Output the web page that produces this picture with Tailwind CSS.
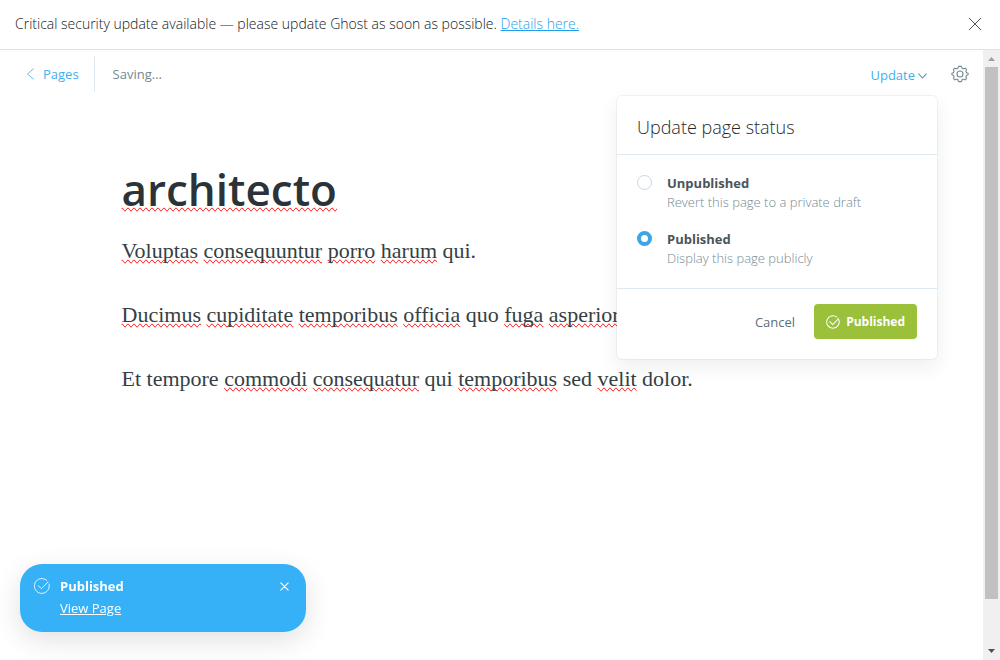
<!DOCTYPE html>
<html lang="en">
<head>
<meta charset="utf-8">
<meta name="viewport" content="width=device-width, initial-scale=1">
<title>Page editor</title>
<script src="https://cdn.jsdelivr.net/npm/@tailwindcss/browser@4"></script>
</head>
<body class="flex h-screen flex-col overflow-hidden bg-white font-['Open_Sans','Noto_Sans',sans-serif] text-[13px] leading-5 text-[#343f44]">

<aside class="flex shrink-0 items-center justify-between border-b border-[#dfe1e3] pt-[14px] pr-[18px] pb-[15px] pl-[15px]">
  <p class="text-[14px] font-light text-[#10181c]">Critical security update available — please update Ghost as soon as possible. <a href="#" class="text-[#1f9fea] underline">Details here.</a></p>
  <button type="button" aria-label="Close" class="p-0 text-[#4a555b]">
    <svg class="size-[14px]" viewBox="0 0 14 14" fill="none" stroke="currentColor" stroke-width="1" stroke-linecap="round"><path d="M1.2 1.2l11.6 11.6M12.8 1.2L1.2 12.8"/></svg>
  </button>
</aside>

<div class="flex min-h-0 flex-1">
  <main class="min-w-0 flex-1 overflow-hidden">
    <header class="flex items-center justify-between pt-[6px] pr-[14px] pl-[26px]">
      <div class="flex h-9 items-center">
        <a href="#" class="flex h-full items-center gap-2 border-r border-[#dfe9f1] pr-[15px] text-[#3eb0ef]">
          <svg class="h-3 w-[9px]" viewBox="0 0 9 12" fill="none" stroke="currentColor" stroke-width=".8" stroke-linecap="round" stroke-linejoin="round"><path d="M7.5 .8L1.5 6l6 5.2"/></svg>
          Pages
        </a>
        <span class="pl-[18px] text-[#738a94]">Saving...</span>
      </div>
      <div class="flex h-9 items-center gap-6">
        <div class="relative">
          <button type="button" aria-expanded="true" class="flex items-center gap-[3px] pt-[2px] text-[#3eb0ef]">Update
            <svg class="mt-[2px] h-[6px] w-[9px] text-[#5f95b0]" viewBox="0 0 9 6" fill="none" stroke="currentColor" stroke-width="1.1" stroke-linecap="round" stroke-linejoin="round"><path d="M.7 .8l3.8 4.2L8.3 .8"/></svg>
          </button>
          <form class="absolute top-[33px] -right-[10px] z-10 w-[320px] rounded-[5px] bg-white shadow-[0_0_0_1px_rgba(99,114,130,0.08),0_8px_20px_rgba(27,39,51,0.08)]">
            <h2 class="border-b border-[#dfe9f1] px-5 pt-[17px] pb-[13px] text-[18px] leading-7 font-light text-[#1f2a2f]">Update page status</h2>
            <div class="flex flex-col gap-[17px] border-b border-[#dfe9f1] px-5 pt-[18px] pb-5">
              <label class="flex items-start gap-[15px]">
                <input type="radio" name="status" class="mt-[2px] size-[15px] shrink-0 appearance-none rounded-full border border-[#c5d8e5] bg-white checked:border-4 checked:border-[#3ba5e6]">
                <span class="flex flex-col"><strong class="font-bold text-[#4a555b]">Unpublished</strong><span class="leading-[19px] font-light text-[#738a94]">Revert this page to a private draft</span></span>
              </label>
              <label class="flex items-start gap-[15px]">
                <input type="radio" name="status" checked class="mt-[2px] size-[15px] shrink-0 appearance-none rounded-full border border-[#c5d8e5] bg-white checked:border-4 checked:border-[#3ba5e6]">
                <span class="flex flex-col"><strong class="font-bold text-[#4a555b]">Published</strong><span class="leading-[19px] font-light text-[#738a94]">Display this page publicly</span></span>
              </label>
            </div>
            <div class="flex items-center justify-end gap-[19px] px-5 pt-[15px] pb-5">
              <button type="button" class="text-[#5b7079]">Cancel</button>
              <button type="submit" class="flex h-[35px] items-center gap-[6px] rounded-[4px] bg-[#9bc039] px-3 text-[12px] font-bold text-white">
                <svg class="size-[14px]" viewBox="0 0 24 24" fill="none" stroke="currentColor" stroke-width="1.8" stroke-linecap="round" stroke-linejoin="round"><path d="M21.9 8.200A10.700 10.700 0 1 1 18.600 3.600M6.500 11.500l5 5L21.500 6"/></svg>
                Published
              </button>
            </div>
          </form>
        </div>
        <button type="button" aria-label="Settings" class="text-[#738a94]">
          <svg class="size-[18px]" viewBox="0 0 24 24" fill="none" stroke="currentColor" stroke-width="1.5" stroke-linejoin="round"><circle cx="12" cy="12" r="4"/><path d="M14.300 3.200a2.500 2.500 0 0 0 3.600 1.500l1-.5 1.900 1.900-.5 1a2.500 2.500 0 0 0 1.500 3.600l1 .3v2l-1 .3a2.500 2.500 0 0 0-1.500 3.600l.5 1-1.900 1.900-1-.5a2.500 2.500 0 0 0-3.600 1.500l-.5 1.400h-3.600l-.5-1.400a2.500 2.500 0 0 0-3.600-1.500l-1 .5-1.900-1.900.5-1a2.500 2.500 0 0 0-1.500-3.600l-1-.3v-2l1-.3a2.500 2.500 0 0 0 1.500-3.600l-.5-1 1.900-1.900 1 .5a2.500 2.500 0 0 0 3.600-1.500l.5-1.400h3.600z"/></svg>
        </button>
      </div>
    </header>

    <article class="mx-auto max-w-[740px] pt-[66px]">
      <h1 class="text-[44px] leading-[62px] font-semibold text-[#2b3338]"><span class="[text-decoration-line:spelling-error]">architecto</span></h1>
      <div class="flex flex-col gap-8 pt-[15px] font-['Liberation_Serif',serif] text-[22px] leading-8">
        <p><span class="[text-decoration-line:spelling-error]">Voluptas</span> <span class="[text-decoration-line:spelling-error]">consequuntur</span> <span class="[text-decoration-line:spelling-error]">porro</span> <span class="[text-decoration-line:spelling-error]">harum</span> qui.</p>
        <p><span class="[text-decoration-line:spelling-error]">Ducimus</span> <span class="[text-decoration-line:spelling-error]">cupiditate</span> <span class="[text-decoration-line:spelling-error]">temporibus</span> <span class="[text-decoration-line:spelling-error]">officia</span> quo <span class="[text-decoration-line:spelling-error]">fuga</span> <span class="[text-decoration-line:spelling-error]">asperiores</span>.</p>
        <p>Et tempore <span class="[text-decoration-line:spelling-error]">commodi</span> <span class="[text-decoration-line:spelling-error]">consequatur</span> qui <span class="[text-decoration-line:spelling-error]">temporibus</span> sed <span class="[text-decoration-line:spelling-error]">velit</span> dolor.</p>
      </div>
    </article>
  </main>

  <div aria-hidden="true" class="flex w-[17px] shrink-0 flex-col items-center bg-[#f0f0f0]">
    <svg class="h-[17px] w-[17px] shrink-0" viewBox="0 0 17 17" fill="#a0a0a0"><path d="M5 11h7L8.500 7z"/></svg>
    <div class="mb-11 w-[13px] flex-1 bg-[#c1c1c1]"></div>
    <svg class="h-[17px] w-[17px] shrink-0" viewBox="0 0 17 17" fill="#505050"><path d="M5 6h7l-3.500 4z"/></svg>
  </div>
</div>

<section role="status" class="fixed bottom-7 left-5 flex w-[286px] items-start rounded-[22px] bg-[#36b1f8] pt-3 pr-[17px] pb-[13px] pl-[14px] text-white shadow-[0_8px_28px_rgba(0,0,0,0.12)]">
  <svg class="mt-[2px] size-4 shrink-0" viewBox="0 0 24 24" fill="none" stroke="currentColor" stroke-width="1.300" stroke-linecap="round" stroke-linejoin="round"><path d="M22.600 9A11.200 11.200 0 1 1 19.200 3.500M6.500 11.500l4.500 4.500L21 6"/></svg>
  <div class="flex flex-1 flex-col gap-px pl-[10px] leading-[21px]">
    <strong class="font-bold">Published</strong>
    <a href="#" class="underline">View Page</a>
  </div>
  <button type="button" aria-label="Dismiss" class="mt-[6px]">
    <svg class="size-[9px]" viewBox="0 0 9 9" fill="none" stroke="currentColor" stroke-width="1.100" stroke-linecap="round"><path d="M.8 .8l7.400 7.400M8.200 .8L.8 8.200"/></svg>
  </button>
</section>
</body>
</html>
